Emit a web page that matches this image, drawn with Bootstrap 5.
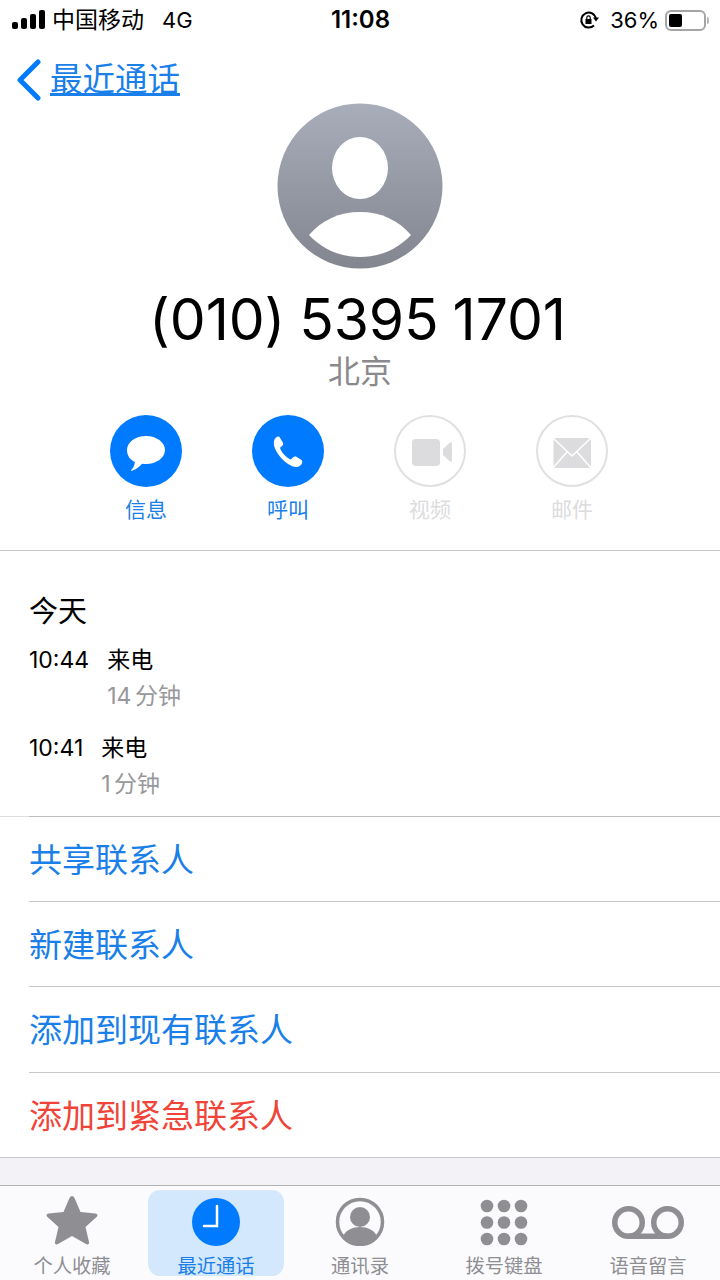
<!DOCTYPE html>
<html lang="zh-CN">
<head>
    <meta charset="UTF-8">
    <meta name="viewport" content="width=device-width, initial-scale=1.0">
    <title>最近通话</title>
    <link rel="stylesheet" href="https://cdn.jsdelivr.net/npm/bootstrap@5.3.0/dist/css/bootstrap.min.css">
    <style>
        html, body { height: 1280px; overflow: hidden; }
        body { background: #fff; color: #000; font-family: Inter, "Noto Sans CJK SC", sans-serif; }
        .phone { width: 720px; height: 1280px; }

        .statusbar { height: 40px; padding: 0 11px 0 12px; font-size: 22px; line-height: 40px; }
        .statusbar .side { width: 300px; }
        .carrier { font-size: 23px; margin-left: 6px; }
        .nettype { margin-left: 18px; }
        .clock { font-size: 24px; font-weight: 600; }
        .rotlock { margin-right: 11px; }
        .batt { width: 41px; height: 21px; border: 2px solid #a5a5a5; border-radius: 6px; padding: 2px; margin-left: 6px; }
        .batt i { display: block; width: 13px; height: 13px; background: #000; border-radius: 2px; }
        .batt-tip { width: 2px; height: 7px; background: #b5b5b5; border-radius: 0 2px 2px 0; margin-left: 1px; }

        .backrow { height: 63px; padding: 17px 0 0 16px; color: #007aff; }
        .backrow a { font-size: 32.500px; color: #1a7fe8; line-height: 40px; margin-left: 8px; }

        .avatar-wrap { height: 185px; }
        .callnum { font-size: 57px; line-height: 64px; letter-spacing: -.1px; word-spacing: -2px; height: 64px; padding-right: 5px; }
        .place { font-size: 32px; line-height: 44px; color: #8a8a8e; margin-top: -2px; }

        .actions { margin-top: 21px; padding: 0 75px; height: 136px; border-bottom: 1px solid #c8c8cc; }
        .action { width: 142px; font-size: 21px; line-height: 30px; color: #1a7fe8; }
        .action.off { color: #dcdcde; }
        .action svg { display: block; margin: 0 auto 8px; }

        .calls { padding: 43px 29px 0; height: 265px; }
        .daytitle { font-size: 29px; line-height: 36px; margin-bottom: 14px; }
        .callrow { font-size: 23px; line-height: 32px; }
        .callrow b { font-weight: 400; }
        .callrow .when { margin-right: 18px; }
        .callrow .dur { color: #98989c; margin-top: 4px; margin-bottom: 20px; word-spacing: -3px; }

        .menu-top { height: 1px; background: linear-gradient(to right, #dedede 29px, #bdbdbd 29px); }
        .menu .list-group-item { height: 85.300px; margin-left: 29px; padding: 0; font-size: 33px; line-height: 87px; color: #1a7fe8; border: 0; border-bottom: 1px solid #c8c8cc; border-radius: 0; }
        .menu .list-group-item.danger { margin-left: 0; padding-left: 29px; color: #f04438; }

        .band { height: 27px; background: #f2f2f7; }
        .tabbar { height: 95px; background: #fbfbfd; border-top: 1px solid #b2b2b2; padding: 4px; gap: 8px; }
        .tab { width: 136px; color: #8e8e93; font-size: 19.300px; line-height: 24px; text-decoration: none; border-radius: 12px; height: 86px; }
        .tab svg { display: block; height: 56px; width: 60px; margin: 0 auto 8px; }
        .tab svg.wide { width: 76px; }
        .tab.on { background: #d3e7fd; color: #1a7fe8; }
        .tab span { display: block; }
    </style>
</head>
<body>
<div class="phone d-flex flex-column">
    <div class="statusbar d-flex justify-content-between align-items-center">
        <div class="side d-flex align-items-center">
            <svg width="34" height="22" viewBox="0 0 34 22"><rect x="0" y="13" width="6" height="7" rx="2"/><rect x="9" y="9" width="6" height="11" rx="2"/><rect x="18" y="5" width="6" height="15" rx="2"/><rect x="27" y="1" width="6" height="19" rx="2"/></svg>
            <span class="carrier">中国移动</span><span class="nettype">4G</span>
        </div>
        <div class="clock">11:08</div>
        <div class="side d-flex align-items-center justify-content-end">
            <svg class="rotlock" width="20" height="20" viewBox="0 0 20 20" fill="none" stroke="#000" stroke-width="2"><path d="M15 15.500A7.500 7.500 0 1 1 17 8"/><path d="M14 7.500h6l-3 4z" fill="#000" stroke="none"/><rect x="6.500" y="9" width="6" height="5" fill="#000" stroke="none"/><path d="M7.800 9V7.500a1.700 1.700 0 0 1 3.400 0V9" stroke-width="1.200"/></svg>
            <span>36%</span>
            <div class="batt"><i></i></div><div class="batt-tip"></div>
        </div>
    </div>

    <div class="backrow d-flex align-items-center">
        <svg width="26" height="42" viewBox="0 0 26 42" fill="none" stroke="#007aff" stroke-width="5" stroke-linecap="round" stroke-linejoin="round"><path d="M22 3 4 21l18 18"/></svg>
        <a href="#">最近通话</a>
    </div>

    <div class="avatar-wrap text-center">
        <svg width="166" height="166" viewBox="0 0 166 166">
            <defs><linearGradient id="av" x1="0" y1="0" x2="0" y2="1"><stop offset="0" stop-color="#a8adba"/><stop offset="1" stop-color="#83868f"/></linearGradient></defs>
            <circle cx="83" cy="83" r="82.500" fill="url(#av)"/>
            <ellipse cx="83" cy="65" rx="28" ry="31" fill="#fff"/>
            <path d="M32 132C45 117 62 109 83 109s38 8 51 23c-13 14-31 22-51 22s-38-8-51-22z" fill="#fff"/>
        </svg>
    </div>

    <div class="callnum text-center">(010) 5395 1701</div>
    <div class="place text-center">北京</div>

    <div class="actions d-flex">
        <div class="action text-center">
            <svg width="72" height="72" viewBox="0 0 72 72"><circle cx="36" cy="36" r="36" fill="#007aff"/><path d="M36 21c10.500 0 19 6.300 19 14s-8.500 14-19 14c-1 0-2.500 0-4-.2-2 2.500-6 5.500-10 7-1 .3-1.200-.5-.6-1 1.500-1.500 3-3.500 3.500-7.800C19.500 44.500 17 40 17 35c0-7.700 8.500-14 19-14z" fill="#fff"/></svg>
            信息
        </div>
        <div class="action text-center">
            <svg width="72" height="72" viewBox="0 0 72 72"><circle cx="36" cy="36" r="36" fill="#007aff"/><path transform="translate(2 4) scale(.9)" d="M24 21c2-2 4-2 5 0l3 5c1 2 0 3-1 4l-2 2c0 3 7 12 12 13l2-2c1-1 3-2 4-1l5 3c2 1 2 3 1 5-2 3-5 4-8 3-6-1-12-6-16-11-4-5-7-11-7-15 0-3 1-5 2-6z" fill="#fff"/></svg>
            呼叫
        </div>
        <div class="action off text-center">
            <svg width="72" height="72" viewBox="0 0 72 72"><circle cx="36" cy="36" r="35" fill="#fff" stroke="#e0e0e2" stroke-width="2"/><rect x="18" y="24" width="28" height="27" rx="4" fill="#dcdcde"/><path d="M49 34l7-6.500c.8-.7 2-.2 2 1v17c0 1.200-1.200 1.700-2 1l-7-6.500z" fill="#dcdcde"/></svg>
            视频
        </div>
        <div class="action off text-center">
            <svg width="72" height="72" viewBox="0 0 72 72"><circle cx="36" cy="36" r="35" fill="#fff" stroke="#e0e0e2" stroke-width="2"/><rect x="17.500" y="23" width="37.500" height="30" fill="#dcdcde"/><path d="M16 22l20 19 20-19M16 54l15-17M56 54 41 37" fill="none" stroke="#fff" stroke-width="1.600"/></svg>
            邮件
        </div>
    </div>

    <div class="calls">
        <div class="daytitle">今天</div>
        <div class="callrow d-flex">
            <div class="when">10:44</div>
            <div><b>来电</b><div class="dur">14 分钟</div></div>
        </div>
        <div class="callrow d-flex">
            <div class="when">10:41</div>
            <div><b>来电</b><div class="dur">1 分钟</div></div>
        </div>
    </div>

    <div class="menu-top"></div>
    <div class="menu list-group">
        <a class="list-group-item" href="#">共享联系人</a>
        <a class="list-group-item" href="#">新建联系人</a>
        <a class="list-group-item" href="#">添加到现有联系人</a>
        <a class="list-group-item danger" href="#">添加到紧急联系人</a>
    </div>

    <div class="band"></div>

    <nav class="tabbar d-flex">
        <a class="tab text-center" href="#">
            <svg viewBox="0 0 60 56"><path d="M30 6c1 0 2 1 2.500 2l6 14 15 1.500c2 .2 2.500 2 1.500 3L43.500 37l3.500 15c.4 2-1 3-3 2L30 46l-14 8c-2 1-3.400 0-3-2l3.500-15L5 26.500c-1-1-.5-2.800 1.500-3L21.500 22l6-14c.5-1 1.500-2 2.500-2z" fill="#8e8e93"/></svg>
            <span>个人收藏</span>
        </a>
        <a class="tab on text-center" href="#">
            <svg viewBox="0 0 60 56"><circle cx="30" cy="32" r="24" fill="#007aff"/><path d="M31 16v20H18" fill="none" stroke="#fff" stroke-width="2.500" stroke-linecap="round"/></svg>
            <span>最近通话</span>
        </a>
        <a class="tab text-center" href="#">
            <svg viewBox="0 0 60 56"><circle cx="30" cy="32" r="22.500" fill="#fbfbfd" stroke="#8e8e93" stroke-width="3.500"/><circle cx="30" cy="27" r="10" fill="#8e8e93"/><path d="M13 46c3-6 10-9 17-9s14 3 17 9A22 22 0 0 1 13 46z" fill="#8e8e93"/></svg>
            <span>通讯录</span>
        </a>
        <a class="tab text-center" href="#">
            <svg viewBox="0 0 60 56" fill="#8e8e93"><circle cx="13" cy="16" r="6.300"/><circle cx="30" cy="16" r="6.300"/><circle cx="47" cy="16" r="6.300"/><circle cx="13" cy="32.500" r="6.300"/><circle cx="30" cy="32.500" r="6.300"/><circle cx="47" cy="32.500" r="6.300"/><circle cx="13" cy="49" r="6.300"/><circle cx="30" cy="49" r="6.300"/><circle cx="47" cy="49" r="6.300"/></svg>
            <span>拨号键盘</span>
        </a>
        <a class="tab text-center" href="#">
            <svg class="wide" viewBox="0 0 76 56" fill="none" stroke="#8e8e93" stroke-width="5.500"><circle cx="18.500" cy="32.500" r="13.750"/><circle cx="57.500" cy="32.500" r="13.750"/><path d="M18.500 46.250h39"/></svg>
            <span>语音留言</span>
        </a>
    </nav>
</div>
</body>
</html>
